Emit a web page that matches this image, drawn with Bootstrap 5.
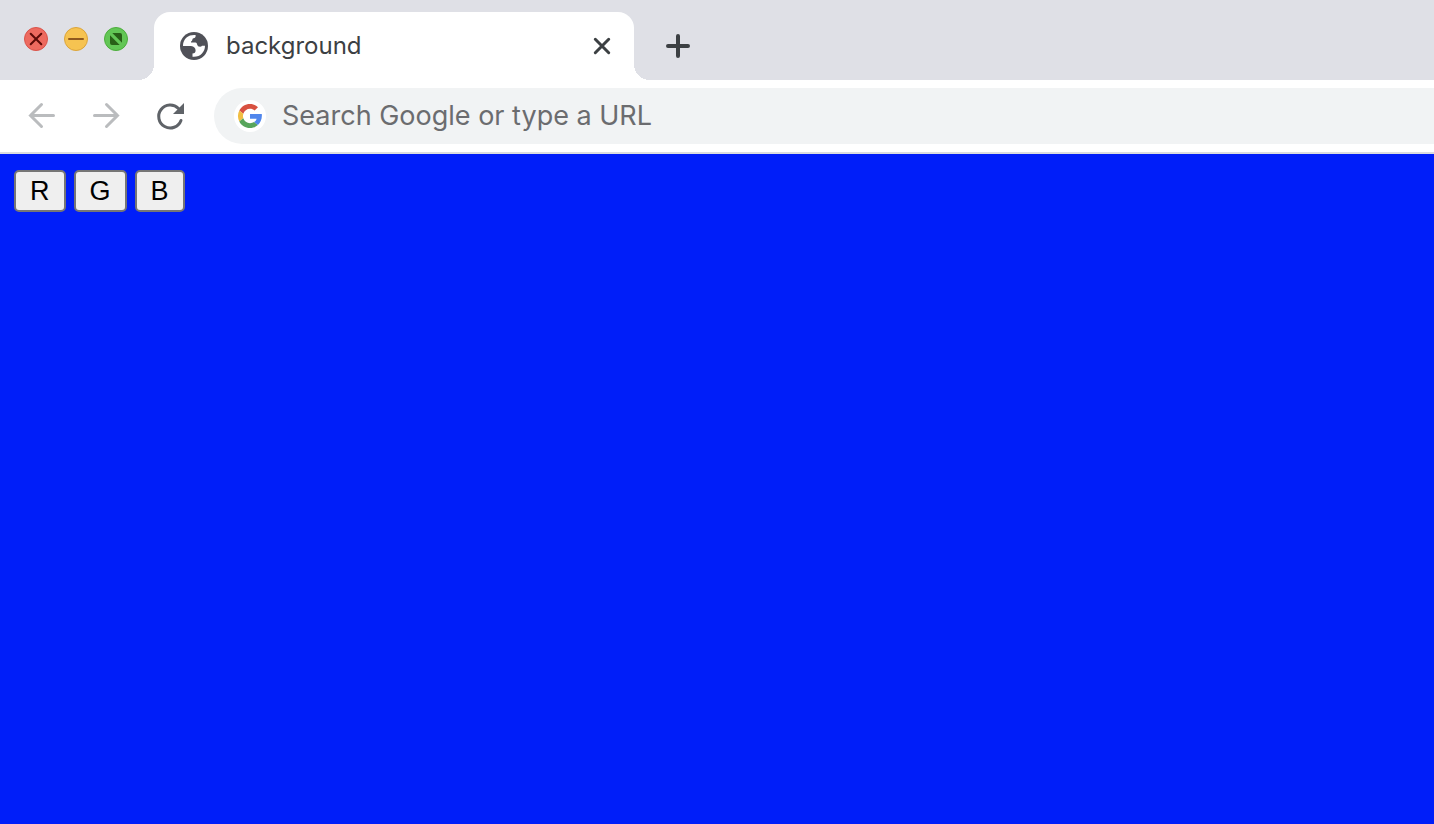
<!DOCTYPE html>
<html lang="en">
<head>
<meta charset="utf-8">
<meta name="viewport" content="width=device-width, initial-scale=1">
<title>background</title>
<link href="https://cdn.jsdelivr.net/npm/bootstrap@5.3.0/dist/css/bootstrap.min.css" rel="stylesheet">
<style>
  body { font-family: Inter, "Liberation Sans", sans-serif; }
  .tab-strip { background: #dfe0e6; padding-top: 12px; }
  .window-controls { width: 154px; padding: 15px 0 0 24px; gap: 16px; }
  .browser-tab { width: 480px; height: 68px; border-radius: 16px 16px 0 0; padding: 0 20px 0 26px; position: relative; }
  .browser-tab::before, .browser-tab::after { content: ""; position: absolute; bottom: 0; width: 16px; height: 16px; }
  .browser-tab::before { right: 100%; background: radial-gradient(circle at 0 0, transparent 16px, #fff 16px); }
  .browser-tab::after { left: 100%; background: radial-gradient(circle at 100% 0, transparent 16px, #fff 16px); }
  .tab-title { font-size: 24px; line-height: 32px; color: #3c4043; margin-left: 18px; }
  .plain-btn { border: 0; background: none; padding: 0; display: flex; }
  .new-tab { margin-left: 30px; }
  .toolbar-row { height: 74px; border-bottom: 2px solid #dadce0; padding: 8px 0 8px 26px; }
  .nav-controls { gap: 32px; margin-right: 28px; }
  .address-bar { height: 56px; background: #f1f3f4; border-radius: 28px 0 0 28px; padding-left: 20px; }
  .address-input { border: 0; background: none; outline: 0; font-size: 27px; line-height: 36px; margin-left: 16px; padding: 0; min-width: 0; color: #3c4043; }
  .address-input::placeholder { color: #6b6c6f; opacity: 1; }
  .viewport-area { background: #001ef9; padding: 16px 14px; gap: 8px; }
  .color-btn { font-family: "Liberation Sans", Arial, sans-serif; font-size: 27px; line-height: 38px; color: #000; background: #efefef; border: 2px solid #767676; border-radius: 5px; padding: 0 14px; }
</style>
</head>
<body class="d-flex flex-column min-vh-100">
<header>
  <div class="tab-strip d-flex">
    <div class="window-controls d-flex flex-shrink-0 align-items-start">
      <button class="plain-btn" type="button" aria-label="Close window"><svg width="24" height="24" viewBox="0 0 24 24"><circle cx="12" cy="12" r="11.5" fill="#ed6a5f" stroke="#d9534a"/><path d="M6.7 6.7l10.6 10.6M17.3 6.7L6.7 17.3" stroke="#5c0b08" stroke-width="2" stroke-linecap="round"/></svg></button>
      <button class="plain-btn" type="button" aria-label="Minimize window"><svg width="24" height="24" viewBox="0 0 24 24"><circle cx="12" cy="12" r="11.5" fill="#f6c351" stroke="#dba43b"/><path d="M5 12h14" stroke="#8f591d" stroke-width="2" stroke-linecap="round"/></svg></button>
      <button class="plain-btn" type="button" aria-label="Zoom window"><svg width="24" height="24" viewBox="0 0 24 24"><circle cx="12" cy="12" r="11.5" fill="#62c655" stroke="#4cad3c"/><path d="M8.3 6H16a2 2 0 0 1 2 2v7.7zM6 8.3V16a2 2 0 0 0 2 2h7.7z" fill="#286017"/></svg></button>
    </div>
    <div class="browser-tab bg-white d-flex align-items-center">
      <svg width="28" height="28" viewBox="0 0 28 28" aria-hidden="true"><circle cx="14" cy="14" r="14" fill="#505158"/><path d="M3 14C3 9 6 5 10 3.6Q12.500 2.700 15.600 3V4.500Q15.400 6 13.500 6.200Q12.300 6.500 12.300 8Q12 9 11 9.500V10.500H15.500Q17 10.700 17 12.300Q17.500 14.800 20 14.800Q21.500 14.800 22 13.700H25C25 20 20 25.500 12.500 24.700V21.500Q15.600 21.300 15.600 18.500Q15.500 14.500 11 14z" fill="#fff"/></svg>
      <span class="tab-title">background</span>
      <button class="plain-btn ms-auto" type="button" aria-label="Close tab"><svg width="24" height="24" viewBox="0 0 24 24"><path d="M5.300 5.300l13.400 13.400M18.700 5.300L5.300 18.700" stroke="#3c4043" stroke-width="3" stroke-linecap="round"/></svg></button>
    </div>
    <button class="plain-btn new-tab align-items-center" type="button" aria-label="New tab"><svg width="28" height="28" viewBox="0 0 28 28"><path d="M14 4v20M4 14h20" stroke="#3c4043" stroke-width="4" stroke-linecap="round"/></svg></button>
  </div>
  <div class="toolbar-row bg-white d-flex align-items-center">
    <div class="nav-controls d-flex flex-shrink-0">
      <button class="plain-btn" type="button" aria-label="Back"><svg width="32" height="32" viewBox="0 0 32 32"><path d="M27.500 15.500H4.500M15.500 4.500l-11 11 11 11" fill="none" stroke="#babcbe" stroke-width="3" stroke-linecap="round"/></svg></button>
      <button class="plain-btn" type="button" aria-label="Forward"><svg width="32" height="32" viewBox="0 0 32 32"><path d="M4.500 15.500h23M16.500 4.500l11 11-11 11" fill="none" stroke="#babcbe" stroke-width="3" stroke-linecap="round"/></svg></button>
      <button class="plain-btn" type="button" aria-label="Reload"><svg width="32" height="32" viewBox="0 0 32 32"><path d="M24.500 8.500A11.500 11.500 0 1 0 27 20.500" fill="none" stroke="#5f6368" stroke-width="3" stroke-linecap="round"/><path d="M30 3v11H19z" fill="#5f6368"/></svg></button>
    </div>
    <div class="address-bar d-flex align-items-center flex-grow-1">
      <svg class="flex-shrink-0" width="32" height="32" viewBox="0 0 32 32" aria-hidden="true"><circle cx="16" cy="16" r="16" fill="#fff"/><g transform="translate(4 4)"><path fill="#d85140" d="M12 4.800c1.800 0 3.300.6 4.600 1.800L20 3.200C17.900 1.200 15.200 0 12 0 7.300 0 3.200 2.700 1.300 6.600l4 3.100C6.200 6.900 8.900 4.800 12 4.800z"/><path fill="#f1be42" d="M5.300 14.300a7.300 7.300 0 0 1 0-4.600l-4-3.100a12 12 0 0 0 0 10.800z"/><path fill="#58a55c" d="M12 24c3.200 0 6-1.100 7.900-2.900l-3.800-3c-1.100.7-2.500 1.100-4.100 1.100-3.100 0-5.800-2.100-6.700-4.900l-4 3.100C3.200 21.300 7.300 24 12 24z"/><path fill="#5086ec" d="M23.800 10H12v4.700h6.600c-.3 1.500-1.200 2.700-2.500 3.400l3.800 3c2.600-2.400 4.400-6.300 3.900-11.100z"/></g></svg>
      <input class="address-input flex-grow-1" type="text" aria-label="Address" placeholder="Search Google or type a URL">
    </div>
  </div>
</header>
<main class="viewport-area d-flex align-items-start flex-grow-1">
  <button class="color-btn" type="button">R</button>
  <button class="color-btn" type="button">G</button>
  <button class="color-btn" type="button">B</button>
</main>
<script src="https://cdn.jsdelivr.net/npm/bootstrap@5.3.0/dist/js/bootstrap.bundle.min.js"></script>
</body>
</html>
